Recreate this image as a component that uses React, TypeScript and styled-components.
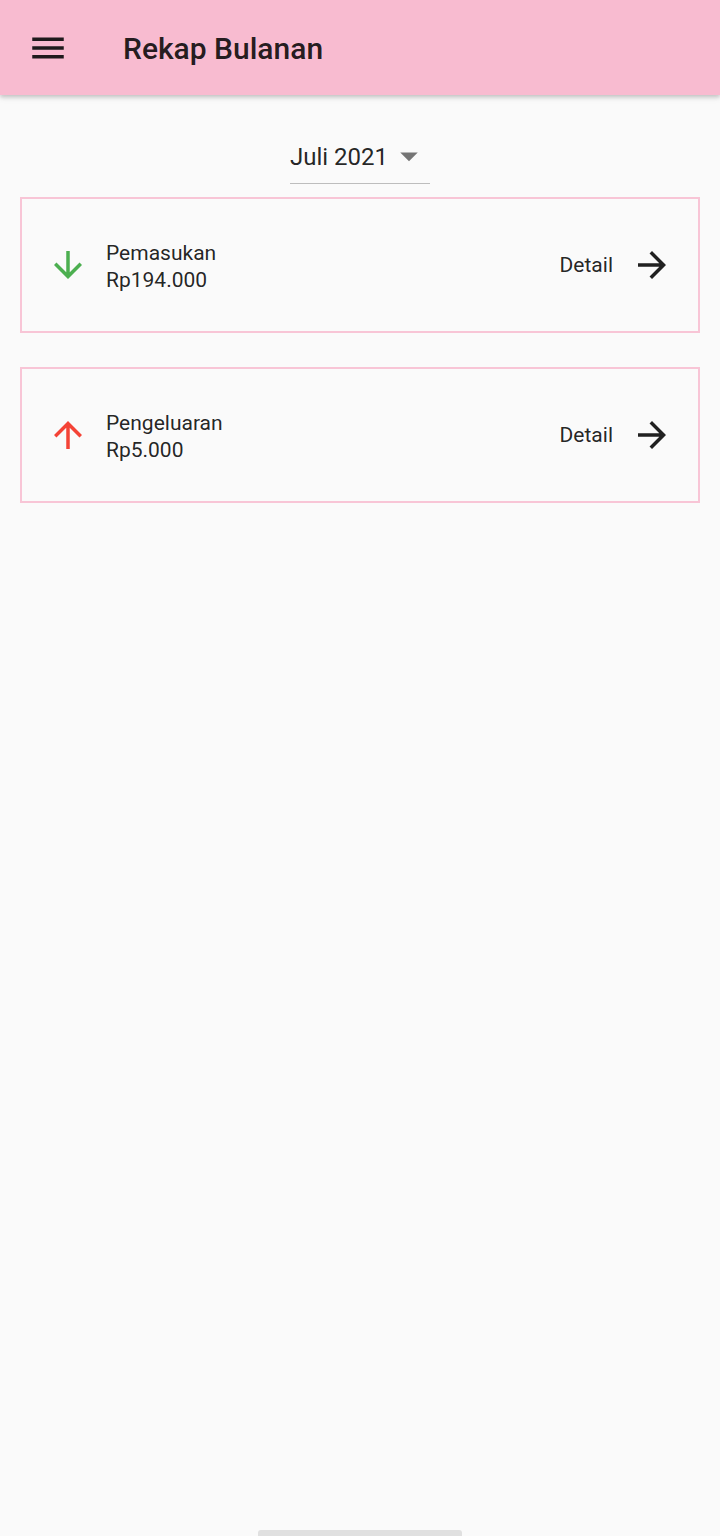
import React from "react";
import styled, { createGlobalStyle } from "styled-components";

type Summary = {
  label: string;
  amount: string;
  kind: "in" | "out";
};

const summaries: Array<Summary> = [
  { label: "Pemasukan", amount: "Rp194.000", kind: "in" },
  { label: "Pengeluaran", amount: "Rp5.000", kind: "out" },
];

const GlobalStyle = createGlobalStyle`
  html, body {
    margin: 0;
    padding: 0;
    background: #fafafa;
    font-family: Roboto, "Noto Sans", "Liberation Sans", sans-serif;
  }
`;

const MenuIcon = () => (
  <svg width="42" height="42" viewBox="0 0 24 24" fill="currentColor">
    <path d="M3 18h18v-2H3v2zm0-5h18v-2H3v2zm0-7v2h18V6H3z" />
  </svg>
);

const DropIcon = () => (
  <svg width="42" height="42" viewBox="0 0 24 24" fill="currentColor">
    <path d="M7 10l5 5 5-5z" />
  </svg>
);

const ArrowDown = () => (
  <svg width="42" height="42" viewBox="0 0 24 24" fill="currentColor">
    <path d="M20 12l-1.41-1.41L13 16.17V4h-2v12.17l-5.58-5.59L4 12l8 8 8-8z" />
  </svg>
);

const ArrowUp = () => (
  <svg width="42" height="42" viewBox="0 0 24 24" fill="currentColor">
    <path d="M4 12l1.41 1.41L11 7.83V20h2V7.83l5.58 5.59L20 12l-8-8-8 8z" />
  </svg>
);

const ArrowForward = () => (
  <svg width="42" height="42" viewBox="0 0 24 24" fill="currentColor">
    <path d="M12 4l-1.41 1.41L16.17 11H4v2h12.17l-5.58 5.59L12 20l8-8z" />
  </svg>
);

const SummaryCard = ({ label, amount, kind }: Summary) => (
  <StyledCard>
    <StyledLeading $kind={kind}>
      {kind === "in" ? <ArrowDown /> : <ArrowUp />}
    </StyledLeading>
    <StyledTexts>
      <span>{label}</span>
      <span>{amount}</span>
    </StyledTexts>
    <StyledDetail>Detail</StyledDetail>
    <StyledTrailing>
      <ArrowForward />
    </StyledTrailing>
  </StyledCard>
);

const App = () => {
  return (
    <StyledPage>
      <GlobalStyle />
      <StyledAppBar>
        <StyledMenuButton>
          <MenuIcon />
        </StyledMenuButton>
        <StyledTitle>Rekap Bulanan</StyledTitle>
      </StyledAppBar>

      <StyledPickerRow>
        <StyledDropdown>
          <span>Juli 2021</span>
          <StyledDropIconWrap>
            <DropIcon />
          </StyledDropIconWrap>
        </StyledDropdown>
      </StyledPickerRow>

      <StyledList>
        {summaries.map((s) => (
          <SummaryCard key={s.label} {...s} />
        ))}
      </StyledList>

      <StyledGestureBar />
    </StyledPage>
  );
};

const StyledPage = styled.div`
  min-height: 1536px;
  display: flex;
  flex-direction: column;
  background: #fafafa;
  overflow: hidden;
`;

const StyledAppBar = styled.header`
  height: 95px;
  display: flex;
  align-items: center;
  background: #f8bbd0;
  box-shadow: 0 2px 4px rgba(0, 0, 0, 0.18), 0 4px 6px rgba(0, 0, 0, 0.06);
  position: relative;
  z-index: 1;
`;

const StyledMenuButton = styled.div`
  width: 42px;
  height: 42px;
  margin-left: 27px;
  color: #1f1a1c;
  display: flex;
`;

const StyledTitle = styled.h1`
  margin: 1px 0 0 54px;
  font-size: 30px;
  font-weight: 500;
  color: rgba(0, 0, 0, 0.87);
  letter-spacing: 0;
`;

const StyledPickerRow = styled.div`
  display: flex;
  justify-content: center;
  margin-top: 35px;
`;

const StyledDropdown = styled.div`
  height: 53px;
  display: flex;
  align-items: center;
  border-bottom: 1px solid #bdbdbd;
  font-size: 24px;
  color: rgba(0, 0, 0, 0.87);
`;

const StyledDropIconWrap = styled.div`
  width: 42px;
  height: 42px;
  display: flex;
  color: #757575;
  margin-top: -1px;
`;

const StyledList = styled.div`
  display: flex;
  flex-direction: column;
  gap: 34px;
  margin: 13px 20px 0;
`;

const StyledCard = styled.div`
  height: 132px;
  display: flex;
  align-items: center;
  border: 2px solid #f8c5d6;
  padding: 0 25px 0 25px;
`;

const StyledLeading = styled.div<{ $kind: "in" | "out" }>`
  width: 42px;
  height: 42px;
  display: flex;
  color: ${({ $kind }) => ($kind === "in" ? "#4caf50" : "#f44336")};
`;

const StyledTexts = styled.div`
  flex: 1;
  display: flex;
  flex-direction: column;
  margin: 3px 0 0 17px;
  font-size: 21px;
  line-height: 27px;
  color: rgba(0, 0, 0, 0.87);
`;

const StyledDetail = styled.span`
  font-size: 21px;
  color: rgba(0, 0, 0, 0.87);
  margin-right: 18px;
`;

const StyledTrailing = styled.div`
  width: 42px;
  height: 42px;
  display: flex;
  color: #212121;
`;

const StyledGestureBar = styled.div`
  margin: auto auto 0;
  width: 204px;
  height: 6px;
  border-radius: 3px 3px 0 0;
  background: #e0e0e0;
`;

export default App;
